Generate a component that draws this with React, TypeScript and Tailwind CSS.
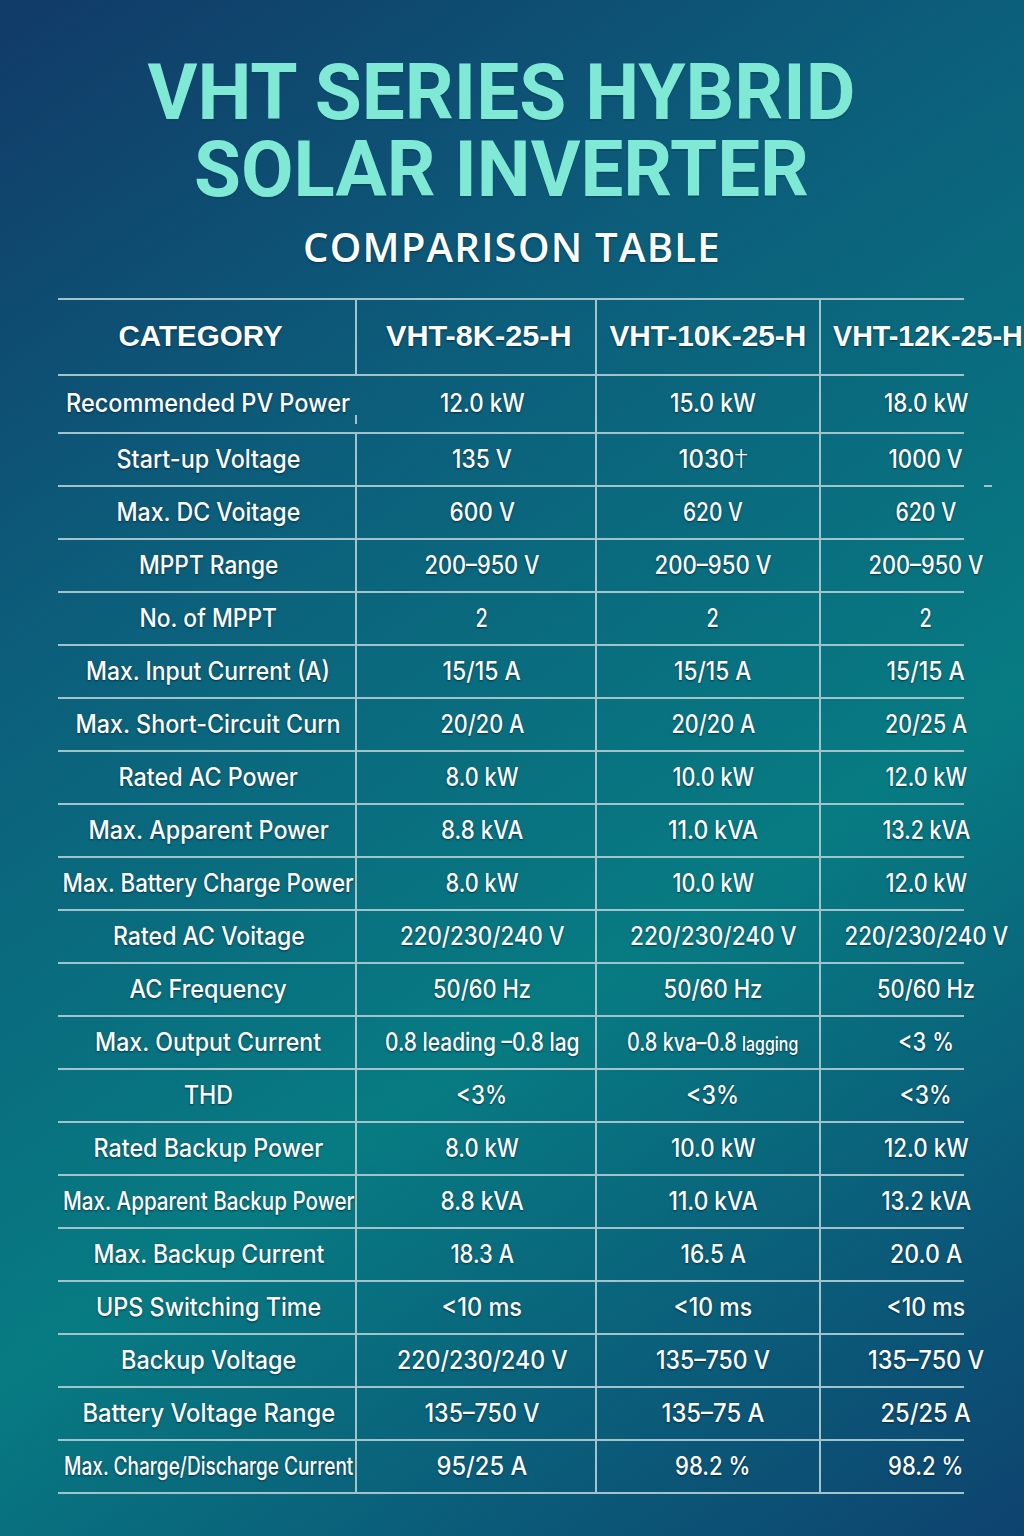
import React, { useLayoutEffect, useRef, useState } from "react";

function Fit({ w, className, children }: { w: number; className?: string; children: React.ReactNode }) {
  const ref = useRef<HTMLSpanElement>(null);
  const [s, setS] = useState(1);
  useLayoutEffect(() => {
    const measure = () => {
      const el = ref.current;
      if (!el) return;
      const n = el.offsetWidth;
      if (n > 0) setS(Math.max(0.7, Math.min(1.25, w / n)));
    };
    measure();
    if (document.fonts && document.fonts.ready) document.fonts.ready.then(measure);
  }, [w]);
  return (
    <span
      ref={ref}
      className={"inline-block whitespace-nowrap origin-center " + (className ?? "")}
      style={{ transform: `scaleX(${s})` }}
    >
      {children}
    </span>
  );
}

type Cell = React.ReactNode;
type Row = [string, number, Cell, number, Cell, number, Cell, number];

const rows: Row[] = [
  ["Recommended PV Power", 284, "12.0 kW", 85, "15.0 kW", 86, "18.0 kW", 84],
  [
    "Start-up Voltage",
    184,
    "135 V",
    60,
    <>
      1030<span className="font-['Roboto',sans-serif] font-light">†</span>
    </>,
    69,
    "1000 V",
    74,
  ],
  ["Max. DC Voitage", 184, "600 V", 65, "620 V", 60, "620 V", 61],
  ["MPPT Range", 139, "200–950 V", 115, "200–950 V", 117, "200–950 V", 115],
  ["No. of MPPT", 137, "2", 12, "2", 12, "2", 12],
  ["Max. Input Current (A)", 244, "15/15 A", 78, "15/15 A", 77, "15/15 A", 78],
  ["Max. Short-Circuit Curn", 265, "20/20 A", 84, "20/20 A", 84, "20/25 A", 82],
  ["Rated AC Power", 179, "8.0 kW", 73, "10.0 kW", 82, "12.0 kW", 82],
  ["Max. Apparent Power", 240, "8.8 kVA", 82, "11.0 kVA", 90, "13.2 kVA", 88],
  ["Max. Battery Charge Power", 291, "8.0 kW", 73, "10.0 kW", 82, "12.0 kW", 82],
  ["Rated AC Voitage", 192, "220/230/240 V", 165, "220/230/240 V", 167, "220/230/240 V", 164],
  ["AC Frequency", 157, "50/60 Hz", 98, "50/60 Hz", 99, "50/60 Hz", 98],
  [
    "Max. Output Current",
    226,
    "0.8 leading –0.8 lag",
    195,
    <>
      0.8 kva–0.8 <span className="text-[20px]">lagging</span>
    </>,
    171,
    "<3 %",
    56,
  ],
  ["THD", 49, "<3%", 51, "<3%", 53, "<3%", 52],
  ["Rated Backup Power", 230, "8.0 kW", 74, "10.0 kW", 85, "12.0 kW", 85],
  ["Max. Apparent Backup Power", 292, "8.8 kVA", 83, "11.0 kVA", 89, "13.2 kVA", 90],
  ["Max. Backup Current", 231, "18.3 A", 64, "16.5 A", 65, "20.0 A", 72],
  ["UPS Switching Time", 225, "<10 ms", 81, "<10 ms", 79, "<10 ms", 79],
  ["Backup Voltage", 175, "220/230/240 V", 171, "135–750 V", 114, "135–750 V", 116],
  ["Battery Voltage Range", 253, "135–750 V", 115, "135–75 A", 103, "25/25 A", 90],
  ["Max. Charge/Discharge Current", 289, "95/25 A", 91, "98.2 %", 75, "98.2 %", 75],
];

const line = "border-[#a3c3ca]";
const txt =
  "font-['Inter','Roboto',sans-serif] text-[25px] font-medium text-white [text-shadow:0_1px_2px_rgba(0,25,45,0.7)]";
const head =
  "font-['Liberation_Sans','Arial',sans-serif] font-bold text-[29px] text-white [text-shadow:0_1px_2px_rgba(0,25,45,0.7)]";

export default function App() {
  return (
    <div className="w-full h-[1536px] overflow-hidden bg-[linear-gradient(146deg,#113a68_0%,#0c5e7b_30%,#077b82_62%,#0b5878_85%,#0e436f_100%)]">
      {/* Title */}
      <div className="pt-[55px] pr-[22px] flex flex-col items-center font-['Roboto','Liberation_Sans',sans-serif] font-bold text-[77px] leading-[77px] text-[#7fe9d5] [text-shadow:0_2px_0_rgba(10,70,90,0.55)]">
        <Fit w={708}>VHT SERIES HYBRID</Fit>
        <Fit w={615}>SOLAR INVERTER</Fit>
      </div>
      <div className="mt-[18px] flex justify-center font-['Open_Sans','Roboto',sans-serif] font-semibold text-[39px] leading-[40px] tracking-[0.03em] text-white [text-shadow:0_1px_2px_rgba(0,25,45,0.6)]">
        <Fit w={418}>COMPARISON TABLE</Fit>
      </div>

      {/* Table */}
      <div className={"mt-[31px] ml-[58px] w-[906px] border-t-2 " + line}>
        {/* Header */}
        <div className={"grid grid-cols-[299px_240px_224px_143px] h-[76px] border-b-2 " + line}>
          <div className={"flex items-center justify-center pr-[11px] border-r-2 " + line}>
            <Fit w={164} className={head}>
              CATEGORY
            </Fit>
          </div>
          <div className={"flex items-center justify-center pl-[6px] border-r-2 " + line}>
            <Fit w={186} className={head}>
              VHT-8K-25-H
            </Fit>
          </div>
          <div className={"flex items-center justify-center border-r-2 " + line}>
            <Fit w={197} className={head}>
              VHT-10K-25-H
            </Fit>
          </div>
          <div className="flex items-center">
            <div className="w-[214px] shrink-0 flex justify-center">
              <Fit w={190} className={head}>
                VHT-12K-25-H
              </Fit>
            </div>
          </div>
        </div>

        {rows.map((r, i) => (
          <div
            key={i}
            className={
              "relative grid grid-cols-[299px_240px_224px_143px] border-b-2 " +
              line +
              (i === 0 ? " h-[58px]" : " h-[53px]")
            }
          >
            <div
              className={
                "relative flex items-center justify-center pl-[4px] border-r-2 " +
                (i === 0 ? "border-r-transparent" : line)
              }
            >
              <Fit w={r[1]} className={txt}>
                {r[0]}
              </Fit>
              {i === 0 && <span className="absolute right-[-2px] top-[39px] h-[9px] w-[2px] bg-[#a3c3ca]" />}
            </div>
            <div className={"flex items-center justify-center pl-[12px] border-r-2 " + line}>
              <Fit w={r[3]} className={txt}>
                {r[2]}
              </Fit>
            </div>
            <div className={"flex items-center justify-center pl-[10px] border-r-2 " + line}>
              <Fit w={r[5]} className={txt}>
                {r[4]}
              </Fit>
            </div>
            <div className="flex items-center">
              <div className="w-[210px] shrink-0 flex justify-center">
                <Fit w={r[7]} className={txt}>
                  {r[6]}
                </Fit>
              </div>
            </div>
            {i === 1 && <span className="absolute left-[926px] bottom-[-2px] h-[2px] w-[8px] bg-[#a3c3ca]" />}
          </div>
        ))}
      </div>
    </div>
  );
}
